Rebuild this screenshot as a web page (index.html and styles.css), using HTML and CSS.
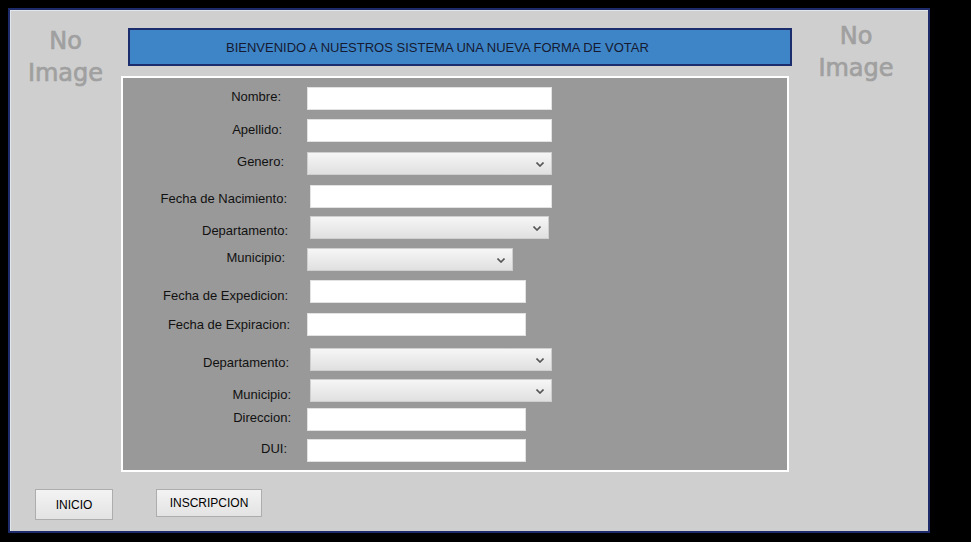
FILE: index.html
```html
<!DOCTYPE html>
<html lang="es">
<head>
<meta charset="utf-8">
<title>Registro</title>
<link rel="stylesheet" href="styles.css">
</head>
<body>
<div class="frame">
  <div class="top">
    <div class="noimg noimg-left">No<br>Image</div>
    <div class="main">
      <div class="banner">BIENVENIDO A NUESTROS SISTEMA UNA NUEVA FORMA DE VOTAR</div>
      <div class="form">
        <div class="row f-nombre"><label>Nombre:</label><input class="ctl" type="text"></div>
        <div class="row f-apellido"><label>Apellido:</label><input class="ctl" type="text"></div>
        <div class="row f-genero"><label>Genero:</label><div class="ctl sel"><select></select><svg viewBox="0 0 8 5" width="8" height="5"><path d="M0.5 0.5 L4 4 L7.5 0.5" fill="none" stroke="#555" stroke-width="1.6"/></svg></div></div>
        <div class="row f-nac"><label>Fecha de Nacimiento:</label><input class="ctl" type="text"></div>
        <div class="row f-depto"><label>Departamento:</label><div class="ctl sel"><select></select><svg viewBox="0 0 8 5" width="8" height="5"><path d="M0.5 0.5 L4 4 L7.5 0.5" fill="none" stroke="#555" stroke-width="1.6"/></svg></div></div>
        <div class="row f-muni"><label>Municipio:</label><div class="ctl sel"><select></select><svg viewBox="0 0 8 5" width="8" height="5"><path d="M0.5 0.5 L4 4 L7.5 0.5" fill="none" stroke="#555" stroke-width="1.6"/></svg></div></div>
        <div class="row f-exped"><label>Fecha de Expedicion:</label><input class="ctl" type="text"></div>
        <div class="row f-expir"><label>Fecha de Expiracion:</label><input class="ctl" type="text"></div>
        <div class="row f-depto2"><label>Departamento:</label><div class="ctl sel"><select></select><svg viewBox="0 0 8 5" width="8" height="5"><path d="M0.5 0.5 L4 4 L7.5 0.5" fill="none" stroke="#555" stroke-width="1.6"/></svg></div></div>
        <div class="row f-muni2"><label>Municipio:</label><div class="ctl sel"><select></select><svg viewBox="0 0 8 5" width="8" height="5"><path d="M0.5 0.5 L4 4 L7.5 0.5" fill="none" stroke="#555" stroke-width="1.6"/></svg></div></div>
        <div class="row f-dir"><label>Direccion:</label><input class="ctl" type="text"></div>
        <div class="row f-dui"><label>DUI:</label><input class="ctl" type="text"></div>
      </div>
    </div>
    <div class="noimg noimg-right">No<br>Image</div>
  </div>
  <div class="buttons">
    <button class="btn btn-inicio">INICIO</button>
    <button class="btn btn-inscripcion">INSCRIPCION</button>
  </div>
</div>
</body>
</html>
```
FILE: styles.css
```css
html, body {
  background: #000;
}
body {
  margin: 8px;
  font-family: "Liberation Sans", Arial, sans-serif;
}
.frame {
  box-sizing: border-box;
  width: 922px;
  height: 525px;
  background: #cfcfcf;
  border: 2px solid #1d2b6b;
  box-shadow: inset 1px 1px 0 #e4e6ee;
  display: flex;
  flex-direction: column;
}
.top {
  display: grid;
  grid-template-columns: 111px 671px 1fr;
}
.noimg {
  font-family: "DejaVu Sans", Verdana, sans-serif;
  font-size: 24px;
  line-height: 32px;
  color: #a0a0a0;
  -webkit-text-stroke: 0.7px #a0a0a0;
  text-align: center;
}
.noimg-left {
  padding-top: 15px;
}
.noimg-right {
  padding-top: 10px;
  padding-right: 8px;
}
.main {
  padding-top: 18px;
}
.banner {
  box-sizing: border-box;
  margin-left: 7px;
  width: 664px;
  height: 38px;
  background: #3e85c8;
  border: 2px solid #1b2d6c;
  color: #151a30;
  font-size: 13px;
  display: flex;
  align-items: center;
  padding-left: 96px;
}
.form {
  box-sizing: border-box;
  margin-top: 10px;
  width: 668px;
  height: 396px;
  background: #999999;
  border: 2px solid #ffffff;
  padding-top: 9px;
  display: flex;
  flex-direction: column;
}
.row {
  display: flex;
  align-items: center;
  height: 23px;
  margin-top: var(--gap, 9px);
}
.row:first-child {
  margin-top: 0;
}
.row label {
  box-sizing: border-box;
  width: 170px;
  text-align: right;
  font-size: 13px;
  line-height: 15px;
  color: #111;
  padding-right: var(--lp, 4px);
  margin-top: calc(var(--ly, 0px) * 2);
}
.ctl {
  box-sizing: border-box;
  height: 23px;
  margin-left: calc(14px + var(--cx, 0px));
  width: var(--cw, 245px);
  font-family: inherit;
  font-size: 13px;
}
input.ctl {
  background: #fff;
  border: 1px solid #e2e2e2;
  padding: 0 3px;
  outline: none;
}
.sel {
  position: relative;
  background: linear-gradient(#f6f6f6, #e0e0e0);
  border: 1px solid #cfcfcf;
}
.sel select {
  appearance: none;
  -webkit-appearance: none;
  width: 100%;
  height: 100%;
  border: 0;
  background: transparent;
  outline: none;
}
.sel svg {
  position: absolute;
  right: 7px;
  top: 9px;
}

.f-nombre  { --lp: 12px; --ly: -1.6px; --cw: 245px; }
.f-apellido{ --lp: 11px; --ly: -1.3px; --cw: 245px; --gap: 9px; }
.f-genero  { --lp: 9px;  --ly: -1.6px; --cw: 245px; --gap: 10px; }
.f-nac     { --lp: 6px;  --ly: 1.8px;  --cw: 242px; --cx: 3px; --gap: 10px; }
.f-depto   { --lp: 5px;  --ly: 2.7px;  --cw: 239px; --cx: 3px; --gap: 8px; }
.f-muni    { --lp: 8px;  --ly: -2.5px; --cw: 206px; --gap: 9px; }
.f-exped   { --lp: 5px;  --ly: 3.7px;  --cw: 216px; --cx: 3px; --gap: 9px; }
.f-expir   { --lp: 3px;  --ly: 0px;    --cw: 219px; --gap: 10px; }
.f-depto2  { --lp: 4px;  --ly: 3px;    --cw: 242px; --cx: 3px; --gap: 12px; }
.f-muni2   { --lp: 2px;  --ly: 4px;    --cw: 242px; --cx: 3px; --gap: 8px; }
.f-dir     { --lp: 2px;  --ly: -1.6px; --cw: 219px; --gap: 6px; }
.f-dui     { --lp: 6px;  --ly: -2px;   --cw: 219px; --gap: 8px; }

.buttons {
  display: flex;
  align-items: flex-start;
  gap: 43px;
  margin-top: 17px;
  padding-left: 25px;
}
.btn {
  box-sizing: border-box;
  font-family: "Liberation Sans", Arial, sans-serif;
  font-size: 12px;
  color: #000;
  background: linear-gradient(#f3f3f3, #e3e3e3);
  border: 1px solid #adadad;
  padding: 0;
}
.btn-inicio {
  width: 78px;
  height: 31px;
}
.btn-inscripcion {
  width: 106px;
  height: 28px;
}
```
